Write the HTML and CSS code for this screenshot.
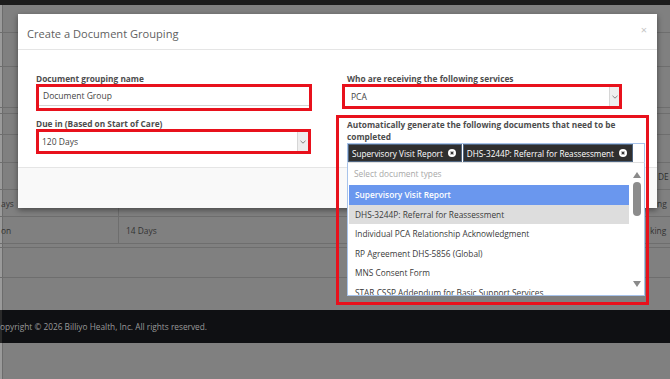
FILE: index.html
```html
<!DOCTYPE html>
<html lang="en">
<head>
<meta charset="utf-8">
<title>Create a Document Grouping</title>
<link rel="stylesheet" href="styles.css">
</head>
<body>
<div class="page">
  <div class="topbar"></div>
  <div class="band b1"></div>
  <div class="band b2"></div>
  <div class="band b3"></div>
  <div class="band b4"></div>
  <div class="band b5"></div>
  <div class="band b6"></div>
  <div class="table">
    <div class="trow thead"><div class="c1"></div><div class="c2"></div><div class="c3"><span class="hd">DE</span></div></div>
    <div class="trow"><div class="c1"><span>ays</span></div><div class="c2"></div><div class="c3"><span class="r1">ng</span></div></div>
    <div class="trow"><div class="c1"><span>on</span></div><div class="c2">14 Days</div><div class="c3"><span class="r2">king</span></div></div>
  </div>
  <div class="band b7"></div>
  <div class="band b8"></div>
  <div class="band b9"></div>
  <div class="pfoot"><span class="copy">opyright © 2026 Billiyo Health, Inc. All rights reserved.</span></div>
</div>

<div class="modal">
  <div class="mhead">
    <h4 class="mtitle">Create a Document Grouping</h4>
    <span class="mclose">×</span>
  </div>
  <div class="mbody">
    <div class="col left">
      <label class="flabel">Document grouping name</label>
      <div class="mark mark-l1">
        <div class="tinput">Document Group</div>
      </div>
      <label class="flabel second">Due in (Based on Start of Care)</label>
      <div class="mark mark-l2">
        <div class="sel"><span class="sval">120 Days</span><span class="sarrow"><svg width="6" height="4" viewBox="0 0 6 4"><path d="M0.5 0.8 L3 3.2 L5.5 0.8" fill="none" stroke="#777" stroke-width="0.9"/></svg></span></div>
      </div>
    </div>
    <div class="col right">
      <label class="flabel rlabel">Who are receiving the following services</label>
      <div class="mark mark-r1">
        <div class="sel sel-r"><span class="sval">PCA</span><span class="sarrow"><svg width="6" height="4" viewBox="0 0 6 4"><path d="M0.5 0.8 L3 3.2 L5.5 0.8" fill="none" stroke="#777" stroke-width="0.9"/></svg></span></div>
      </div>
      <div class="mark mark-r2">
        <label class="flabel mlabel">Automatically generate the following documents that need to be completed</label>
        <div class="multi">
          <span class="tag">Supervisory Visit Report<svg class="tx" width="8" height="8" viewBox="0 0 8 8"><circle cx="4" cy="4" r="4" fill="#fff"/><path d="M2.6 2.6 L5.4 5.4 M5.4 2.6 L2.6 5.4" stroke="#333" stroke-width="1.2"/></svg></span>
          <span class="tag">DHS-3244P: Referral for Reassessment<svg class="tx" width="8" height="8" viewBox="0 0 8 8"><circle cx="4" cy="4" r="4" fill="#fff"/><path d="M2.6 2.6 L5.4 5.4 M5.4 2.6 L2.6 5.4" stroke="#333" stroke-width="1.2"/></svg></span>
        </div>
        <div class="dropdown">
          <div class="dlist">
            <div class="search">Select document types</div>
            <div class="opt hl">Supervisory Visit Report</div>
            <div class="opt sel-opt">DHS-3244P: Referral for Reassessment</div>
            <div class="opt">Individual PCA Relationship Acknowledgment</div>
            <div class="opt">RP Agreement DHS-5856 (Global)</div>
            <div class="opt">MNS Consent Form</div>
            <div class="opt">STAR CSSP Addendum for Basic Support Services</div>
          </div>
          <div class="sbar">
            <span class="tri up"></span>
            <span class="thumb"></span>
            <span class="sfill"></span>
            <span class="tri down"></span>
          </div>
        </div>
      </div>
    </div>
  </div>
  <div class="mfoot"></div>
</div>
</body>
</html>
```

FILE: styles.css
```css
* { box-sizing: border-box; }
html, body { margin: 0; padding: 0; }
body {
  width: 670px;
  height: 379px;
  overflow: hidden;
  background: #808080;
  font-family: "Open Sans", "Liberation Sans", sans-serif;
  position: relative;
}
.page {
  display: flex;
  flex-direction: column;
  height: 379px;
  box-shadow: inset 2px 0 #9a9a9a, inset 3px 0 #6c6c6c;
}
.topbar { height: 5px; background: #1c1c1c; }
.band { border-bottom: 1px solid #6e6e6e; }
.b1 { height: 28px; }
.b2 { height: 34px; }
.b3 { height: 41px; }
.b4 { height: 6px; }
.b5 { height: 21px; }
.b6 { height: 28px; }
.table { display: flex; flex-direction: column; }
.trow {
  display: grid;
  grid-template-columns: 119px 510px 41px;
  height: 27px;
  border-bottom: 1px solid #6e6e6e;
  font-size: 8.4px;
  color: #333;
}
.trow > div { display: flex; align-items: center; overflow: hidden; white-space: nowrap; }
.trow .c1 { border-right: 1px solid #6e6e6e; padding-left: 1px; }
.trow.thead .c1 { border-right: none; }
.trow .c2 { padding-left: 7px; }
.hd { margin-left: 29px; color: #2e2e2e; }
.r1 { margin-left: 28px; }
.r2 { margin-left: 21px; }
.b7 { height: 4px; }
.b8 { height: 30px; }
.b9 { height: 32px; border-bottom: none; }
.pfoot {
  height: 33px;
  background: #0f1013;
  display: flex;
  align-items: center;
  box-shadow: inset 2px 0 #2a2a2a;
}
.copy {
  margin-left: 0;
  font-size: 8.3px;
  color: #9a9a9a;
  white-space: nowrap;
}

/* modal */
.modal {
  position: absolute;
  left: 18px;
  top: 14px;
  width: 639px;
  height: 194px;
  background: #fff;
  box-shadow: 0 2px 6px rgba(0,0,0,0.45);
  display: flex;
  flex-direction: column;
}
.mhead {
  height: 36px;
  flex: none;
  border-bottom: 1px solid #e5e5e5;
  display: flex;
  align-items: center;
  justify-content: space-between;
  padding: 3px 10px 0 9px;
}
.mtitle {
  margin: 0;
  font-size: 11.1px;
  font-weight: 400;
  color: #5f5f5f;
}
.mclose { color: #c4c4c4; font-size: 11px; margin-top: -7px; }
.mbody {
  height: 117px;
  flex: none;
  position: relative;
  z-index: 2;
  display: grid;
  grid-template-columns: 276px 313px;
  column-gap: 24px;
  align-items: start;
  padding: 24px 0 0 18px;
}
.col { display: flex; flex-direction: column; align-items: flex-start; }
.flabel {
  display: block;
  font-size: 8.3px;
  font-weight: 700;
  color: #4d4d4d;
  line-height: 10px;
  height: 10px;
  white-space: nowrap;
}
.second { margin-top: 8px; }
.rlabel { margin-left: 11px; }
.mark { border: 3px solid #e8111c; }
.mark-l1 { width: 276px; height: 27px; padding-bottom: 2px; }
.mark-l2 { width: 275px; height: 25px; }
.mark-r1 { width: 280px; height: 25px; margin-left: 6px; }
.mark-r2 { width: 313px; height: 190px; margin-top: 6px; padding-left: 8px; }
.tinput {
  height: 19px;
  border-bottom: 1px solid #d4d4d4;
  font-size: 8.5px;
  color: #444;
  line-height: 18px;
  padding-left: 4px;
}
.sel {
  height: 19px;
  display: flex;
  align-items: center;
  justify-content: space-between;
  font-size: 8.5px;
  color: #444;
}
.sel .sval { padding-left: 3px; }
.sel-r .sval { padding-left: 6px; }
.sarrow {
  width: 11px;
  height: 19px;
  background: #eeeeee;
  border-left: 1px solid #d6d6d6;
  display: flex;
  align-items: center;
  justify-content: center;
}
.sel-r .sarrow { width: 10px; }
.mlabel {
  white-space: normal;
  line-height: 12px;
  margin-top: 1px;
  width: 290px;
  height: 24px;
}
.multi {
  width: 298px;
  height: 19px;
  border: 1px solid #a8c3ea;
  border-bottom: none;
  display: flex;
  gap: 1px;
  background: #fff;
}
.tag {
  height: 18px;
  background: #2f2f2f;
  border: 1px solid #4f6580;
  color: #fff;
  font-size: 8.2px;
  display: flex;
  align-items: center;
  padding: 0 5px 0 3px;
  gap: 5px;
  white-space: nowrap;
}
.tx { flex: none; }
.dropdown {
  width: 298px;
  height: 134px;
  background: #fff;
  border: 1px solid #a8c3ea;
  border-top: 1px solid #e0e0e0;
  display: flex;
  overflow: hidden;
}
.dlist { flex: 1; overflow: hidden; }
.search {
  height: 22px;
  line-height: 22px;
  font-size: 8.3px;
  color: #a8a8a8;
  padding-left: 6px;
}
.opt {
  height: 19.6px;
  line-height: 19.6px;
  font-size: 8.3px;
  color: #3a3a3a;
  padding-left: 6px;
  margin-left: 1px;
  white-space: nowrap;
}
.opt.hl { background: #6a97ee; color: #fff; font-weight: 600; }
.opt.sel-opt { background: #dddddd; }
.sbar {
  width: 15px;
  flex: none;
  display: flex;
  flex-direction: column;
  align-items: center;
  padding: 9px 0 8px;
}
.tri { width: 0; height: 0; border-left: 4.5px solid transparent; border-right: 4.5px solid transparent; }
.tri.up { border-bottom: 6px solid #8a8a8a; }
.tri.down { border-top: 6px solid #8a8a8a; }
.thumb {
  width: 8px;
  height: 34px;
  margin-top: 4px;
  border-radius: 4px;
  background: #8c8c8c;
}
.sfill { flex: 1; }
.mfoot {
  flex: 1;
  background: #f9f9f9;
  border-top: 1px solid #e5e5e5;
}
```
